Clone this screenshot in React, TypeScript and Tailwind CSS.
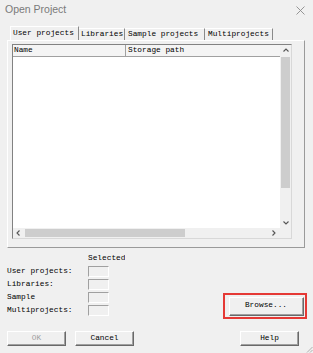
import type React from 'react'

const mono = { fontFamily: '"Liberation Mono", "Noto Sans CJK SC", monospace' }

const Chevron: React.FC<{ dir: 'up' | 'down' | 'left' | 'right' }> = ({ dir }) => {
  const d = {
    up: 'M1.5 4.5 L4 2 L6.5 4.5',
    down: 'M1.5 2.5 L4 5 L6.5 2.5',
    left: 'M4.5 1.5 L2 4 L4.5 6.5',
    right: 'M2.5 1.5 L5 4 L2.5 6.5',
  }[dir]
  return (
    <svg width="8" height="8" viewBox="0 0 8 8">
      <path d={d} fill="none" stroke="#555" strokeWidth="1.1" />
    </svg>
  )
}

const WinButton: React.FC<{ label: string; disabled?: boolean; className?: string }> = ({ label, disabled, className }) => (
  <div
    className={`flex items-center justify-center border border-t-white border-l-white border-r-[#696969] border-b-[#696969] bg-[#f0f0f0] shadow-[inset_-1px_-1px_0_#a0a0a0] ${disabled ? 'text-[#a0a0a0]' : 'text-black'} ${className ?? ''}`}
  >
    {label}
  </div>
)

const counts = ['User projects:', 'Libraries:', 'Sample', 'Multiprojects:']
const tabs = [
  { label: 'Libraries', w: 'w-[46px] pl-[2px]' },
  { label: 'Sample projects', w: 'w-[80px] pl-[3px]' },
  { label: 'Multiprojects', w: 'w-[68px] pl-[3px]' },
]

export default function App() {
  return (
    <div className="relative flex h-[353px] w-[313px] flex-col overflow-hidden bg-[#f0f0f0] text-[7.8px] text-black" style={mono}>
      {/* title bar */}
      <div className="flex h-[20px] items-center justify-between pl-[5px] pr-[8px]">
        <span className="text-[10.5px] text-[#7a7a7a]" style={{ fontFamily: '"Liberation Sans", Arial, sans-serif' }}>
          Open Project
        </span>
        <svg width="9" height="9" viewBox="0 0 9 9">
          <path d="M0.5 0.5 L8.5 8.5 M8.5 0.5 L0.5 8.5" stroke="#8a8a8a" strokeWidth="0.9" />
        </svg>
      </div>

      {/* tabs */}
      <div className="mt-[6px] flex h-[14px] items-end pl-[10px]">
        <div className="flex h-[14px] w-[69px] items-center border-r border-l border-t border-r-[#8a8a8a] border-l-white border-t-white pl-[2px] whitespace-nowrap">
          User projects
        </div>
        {tabs.map((t) => (
          <div key={t.label} className={`flex h-[12px] items-center whitespace-nowrap border-r border-t border-r-[#8a8a8a] border-t-white ${t.w}`}>
            {t.label}
          </div>
        ))}
      </div>

      {/* tab panel */}
      <div className="ml-[7px] h-[208px] w-[298px] border border-t-white border-l-white border-r-[#9a9a9a] border-b-[#9a9a9a]">
        <div className="ml-[4px] mt-[3px] grid h-[195px] w-[280px] grid-cols-[1fr_11px] grid-rows-[1fr_10px] border border-t-[#828282] border-l-[#828282] border-r-[#d8d8d8] border-b-[#d8d8d8] bg-white">
          {/* list */}
          <div className="flex flex-col">
            <div className="flex h-[12px] border-b border-[#a0a0a0] bg-[#f4f4f4]">
              <div className="flex w-[113px] items-center border-r border-[#a0a0a0] pl-[1px]">Name</div>
              <div className="flex flex-1 items-center pl-[2px]">Storage path</div>
            </div>
            <div className="flex-1 bg-white" />
          </div>
          {/* vertical scrollbar */}
          <div className="flex flex-col bg-[#f0f0f0]">
            <div className="flex h-[12px] items-center justify-center">
              <Chevron dir="up" />
            </div>
            <div className="mx-[1px] h-[131px] bg-[#cdcdcd]" />
            <div className="flex-1" />
            <div className="flex h-[10px] items-center justify-center">
              <Chevron dir="down" />
            </div>
          </div>
          {/* horizontal scrollbar */}
          <div className="flex items-center bg-[#f0f0f0]">
            <div className="flex w-[12px] items-center justify-center">
              <Chevron dir="left" />
            </div>
            <div className="my-[1px] h-[8px] w-[160px] bg-[#cdcdcd]" />
            <div className="flex-1" />
            <div className="flex w-[12px] items-center justify-center">
              <Chevron dir="right" />
            </div>
          </div>
          <div className="bg-[#f0f0f0]" />
        </div>
      </div>

      {/* selected counts + browse */}
      <div className="mt-[4px] flex h-[67px] pl-[7px] pr-[6px]">
        <div className="flex flex-col">
          <div className="flex h-[13px] items-center pl-[81px]">
            <span className="w-[37px] overflow-hidden whitespace-nowrap">Selected</span>
          </div>
          {counts.map((c) => (
            <div key={c} className="flex h-[13px] items-center">
              <span className="w-[81px]">{c}</span>
              <div className="h-[11px] w-[21px] border border-t-[#a0a0a0] border-l-[#a0a0a0] border-r-white border-b-white" />
            </div>
          ))}
        </div>
        <div className="ml-auto flex h-[26px] w-[84px] items-center justify-center self-end border-2 border-[#e53935]">
          <WinButton label="Browse..." className="ml-[2px] h-[19px] w-[75px]" />
        </div>
      </div>

      {/* dialog buttons */}
      <div className="mt-[12px] flex pl-[7px]">
        <WinButton label="OK" disabled className="h-[15px] w-[59px]" />
        <WinButton label="Cancel" className="ml-[9px] h-[15px] w-[59px]" />
        <WinButton label="Help" className="ml-[106px] h-[15px] w-[59px]" />
      </div>

      {/* size grip */}
      <svg className="absolute bottom-0 right-0" width="8" height="8" viewBox="0 0 8 8">
        <path d="M7.5 2 L2 7.5 M7.5 5 L5 7.5" stroke="#a0a0a0" strokeWidth="0.8" />
      </svg>
    </div>
  )
}
